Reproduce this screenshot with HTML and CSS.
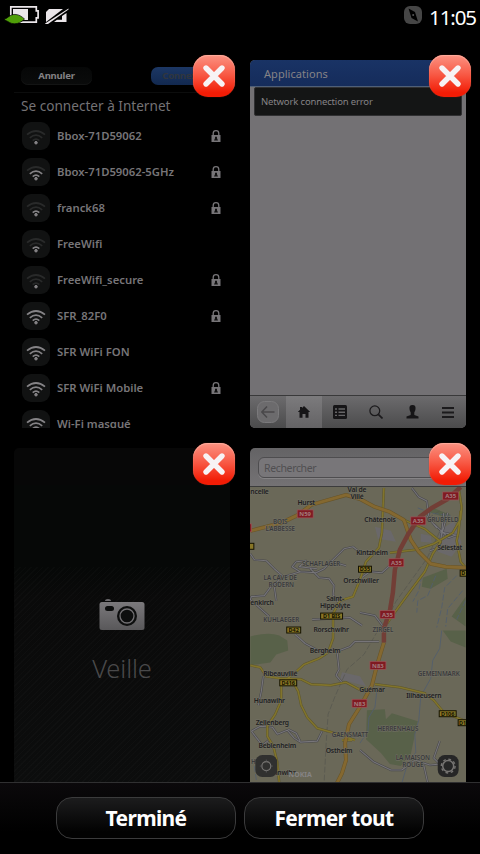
FILE: index.html
```html
<!DOCTYPE html>
<html lang="fr">
<head>
<meta charset="utf-8">
<title>Applications ouvertes</title>
<link rel="stylesheet" href="styles.css">
</head>
<body>
<svg class="defs" aria-hidden="true">
  <symbol id="lock" viewBox="0 0 10 12"><path d="M2.200 5V3.500a2.800 2.800 0 0 1 5.600 0V5" fill="none" stroke="#777578" stroke-width="1.300"/><path d="M.5 5h9v7h-9z" fill="#777578"/><path d="M4 6.800h2v1.500l1 2.200H3l1-2.200z" fill="#111"/></symbol>
  <symbol id="wifi" viewBox="0 0 28 28"><g fill="none" stroke-width="1.700"><path class="w3" d="M5 12.700Q14 5.300 23 12.700"/><path class="w2" d="M7.800 15.800Q14 10.600 20.200 15.800"/><path class="w1" d="M10.700 18.600Q14 15.700 17.300 18.600"/></g><circle cx="14" cy="20.700" r="1.300" fill="#858386"/></symbol>
  <symbol id="cross" viewBox="0 0 42 42"><path d="M13 13l16 16m0-16l-16 16" fill="none" stroke="#f7f3f5" stroke-width="5.400" stroke-linecap="round"/></symbol>
</svg>
<div class="screen">
  <header class="status">
    <svg class="battery" width="70" height="24" viewBox="0 0 70 24">
      <path d="M9.800 2.800h25.500v4h1.800v7h-1.800v4.400H9.800z" fill="none" stroke="#ebe6ea" stroke-width="1.700"/>
      <path d="M12 5h15v11H20L12 12z" fill="#ebe6ea"/>
      <path d="M3.500 14.800c3 .1 4.700-4.400 10.500-4.400 4 0 7 2.400 9.500 4.600-3 3-6 4.800-10 4.800-4.500 0-6-2.500-10-3.800z" fill="#4f9e08" stroke="#000" stroke-width=".7"/>
      <path d="M48 5h14L45 18V8z" fill="#ebe6ea"/>
      <path d="M44.500 19.300L67.500 4.500v1L47 20h-3z" fill="#ebe6ea"/>
      <path d="M65.500 9v9H53l3-2.300h5v-3.600z" fill="#ebe6ea"/>
    </svg>
    <svg class="compass" width="18" height="18" viewBox="0 0 18 18"><rect width="18" height="18" rx="6" fill="#464646"/><path d="M4.500 2.500L11 6l3 9.500L7.500 12z" fill="#000"/><circle cx="9.200" cy="9" r="1" fill="#565656"/></svg>
    <span class="clock">11:05</span>
  </header>

  <main class="grid">
    <section class="card">
      <div class="wifi">
        <div class="wifi-head"><span class="pill cancel">Annuler</span><span class="pill connect">Connexion</span></div>
        <h2>Se connecter à Internet</h2>
        <ul>
          <li class="s0"><svg class="sig"><use href="#wifi"/></svg><span>Bbox-71D59062</span><svg class="lk"><use href="#lock"/></svg></li>
          <li class="s2"><svg class="sig"><use href="#wifi"/></svg><span>Bbox-71D59062-5GHz</span><svg class="lk"><use href="#lock"/></svg></li>
          <li class="s1"><svg class="sig"><use href="#wifi"/></svg><span>franck68</span><svg class="lk"><use href="#lock"/></svg></li>
          <li class="s1"><svg class="sig"><use href="#wifi"/></svg><span>FreeWifi</span></li>
          <li class="s0"><svg class="sig"><use href="#wifi"/></svg><span>FreeWifi_secure</span><svg class="lk"><use href="#lock"/></svg></li>
          <li class="s3"><svg class="sig"><use href="#wifi"/></svg><span>SFR_82F0</span><svg class="lk"><use href="#lock"/></svg></li>
          <li class="s3"><svg class="sig"><use href="#wifi"/></svg><span>SFR WiFi FON</span></li>
          <li class="s3"><svg class="sig"><use href="#wifi"/></svg><span>SFR WiFi Mobile</span><svg class="lk"><use href="#lock"/></svg></li>
          <li class="s3"><svg class="sig"><use href="#wifi"/></svg><span>Wi-Fi masqué</span></li>
        </ul>
      </div>
      <svg class="close"><use href="#cross"/></svg>
    </section>

    <section class="card">
      <div class="store">
        <div class="store-head">Applications</div>
        <div class="error">Network connection error</div>
        <nav class="tools">
          <span><svg width="22" height="22" viewBox="0 0 22 22"><rect x=".5" y=".5" width="21" height="21" rx="7" fill="#6c6b6d" stroke="#7b7a7c"/><path d="M17.500 11H5M10 5.500L4.800 11l5.200 5.500" fill="none" stroke="#49484a" stroke-width="1.500"/></svg></span>
          <span class="on"><svg width="14" height="14" viewBox="0 0 14 14"><path d="M7 1l6.200 6H11.500v5.800H8.500V9h-3v3.800h-3V7H.8L3 4.800V2h2v1z" fill="#161517"/></svg></span>
          <span><svg width="14" height="14" viewBox="0 0 14 14"><rect width="14" height="14" rx="1.500" fill="#161517"/><path d="M2 4h2m1.500 0h6.500M2 7.200h2m1.500 0h6.500M2 10.400h2m1.500 0h6.500" stroke="#666567" stroke-width="1.400"/></svg></span>
          <span><svg width="14" height="14" viewBox="0 0 14 14"><circle cx="5.800" cy="5.800" r="4.900" fill="none" stroke="#1b1a1c" stroke-width="1.300"/><path d="M9.300 9.300L13.500 13.500" stroke="#1b1a1c" stroke-width="1.700"/></svg></span>
          <span><svg width="13" height="14" viewBox="0 0 13 14"><path d="M6.500 0C9 0 9.800 1.400 9.500 4c-.2 2-.9 2.600-1.200 3.400V10l4.200 1.600V13.500H.5v-1.900L4.700 10V7.400C4.400 6.600 3.700 6 3.500 4 3.200 1.400 4 0 6.500 0z" fill="#161517"/></svg></span>
          <span><svg width="12" height="13" viewBox="0 0 12 13"><path d="M0 2h12M0 6.500h12M0 11h12" stroke="#1b1a1c" stroke-width="1.900"/></svg></span>
        </nav>
      </div>
      <svg class="close"><use href="#cross"/></svg>
    </section>

    <section class="card">
      <div class="standby">
        <svg width="46" height="32" viewBox="0 0 46 32">
          <defs><linearGradient id="cam" x2="0" y2="1"><stop stop-color="#7b797c"/><stop offset="1" stop-color="#59585a"/></linearGradient></defs>
          <path d="M6 2q0-2 3-2t3 2z" fill="#6c6a6d"/><rect x=".5" y="3" width="45" height="28" rx="2.500" fill="url(#cam)"/>
          <rect x="6" y="7" width="9" height="5" rx="2.500" fill="#0d0e0e"/><circle cx="28" cy="17" r="10" fill="#0d0e0e"/><circle cx="28" cy="17" r="7" fill="none" stroke="#727073" stroke-width="1.300"/>
        </svg>
        <p>Veille</p>
      </div>
      <svg class="close"><use href="#cross"/></svg>
    </section>

    <section class="card">
      <div class="maps">
        <div class="search"><span>Rechercher</span></div>
        <svg class="map" width="216" height="297" viewBox="250 486 216 297">
          <defs>
            <g id="minor">
              <path d="M250 553l4 6 12 1 8 8 9 8 17-5 16 1 8-4 20-20 9-2 9 7 4-1M300 571l-8-5 4-5 10-1-7 6 18 2M310 568l9 9 10 1 5 7-1 9 6 9M283 576l-13 11-6 8-13 1-1 3 9 8 10 9M276 600l-2-14M312 619l38-2 12 8M346 565l-17-5"/>
              <path d="M412 487l7 9 8 4 2 15M360 578l10-7 12 1 12-11M427 515l10 12M434 523l15 14 8-3M444 512l-3 30-4 8M440 531l19 4M448 512l-9 33M430 550l16-5 8 4M360 612l15 3 9 12"/>
              <path d="M295 634l10 9 13 7 19 1 13-5 5-5h24M337 651l2 18-3 6 6 7M263 676l-2 15 -3 14M251 731l9-5 12 1 5 7 10-4 7 8 6 4 17-1 5-10M251 731l7 9 4 5 8-6M276 725l-6-6M360 750l14 12 17 8 11 0 13-10 15 5 11-1M424 765l4 18M300 741l-4-8-8-4M440 741l-6 17 8 8"/>
            </g>
            <path id="yl" d="M384 487l-2 45-3 15-13 14-6 18-7 17-13 4-7 13 0 25-5 14-9 6-15 6-10 9-14 11M390 552l26-3 18-6 19-11 8-14 1-12-3-19M404 519l21 9 16 13-8 12-8 18-15 20-16 22-7 10M461 510l-2 20-2 10 4 21 5 6M250 665l10 2 6 9 14 2 21 1 10 5 20 1 15-3 13 7 7-1M281 678v22l-6 14-8 12 0 10 6 10 4 16 2 21M291 678l7 13 3 14 6 12 10 11 18 5 20 7M375 684l25 3 25 6 9 7 10 12 22 9M342 740h10"/>
            <path id="main-road" d="M250 530l31-8 17-8 13-10 35-10 14 4 15 8 15 5 14 8 7 20 8 12 12 12 15 3 20 1M384 642l-7 23-5 20-11 20-12 19-4 19 1 17-4 13-5 10"/>
          </defs>
          <g fill="#586149">
            <path d="M250 636q18-5 29-1l8 5 1 10-12 4-6 8-20 3z"/>
            <path d="M367 710l18-1 1 10 6-6 26 8-7 33-10 12-11-2-9-11-15-14z"/>
            <path d="M443 630h23v17l-15-6zM423 577l24-9 1 10-17 10-9-2zM452 616l14-20v30zM431 506l20 8-4 3-18-6z"/>
          </g>
          <path d="M421 533l10 2 1 7-11-1zM375 526l16 4 5 11-18-3zM342 672l18 4 6 10-26-7zM440 530l14-10 8 22-10 14-14-5z" fill="#6a686a"/>
          <g class="streams">
            <path d="M442 630l-2 18-7 12-2 18-10 18-2 24-4 14 1 18-9 14-5 17M377 690l-2 17-6 10-1 14-8 12"/>
            <path d="M436 575l-8 20-10 5-1 12M457 575l-12 12-3 20-5 20M463 590l-15 18-2 18M422 575l-3 15-6 11M466 600l-9 19M418 507l13 5 20 3M256 780l-2-14" stroke-dasharray="6 2"/>
          </g>
          <g class="rail"><path d="M378 630l-14 24-17 15-12 27-7 18-2 30-2 39M447 516l-20 42-31 43-14 29M440 510l-16 10"/></g>
          <use class="minor" href="#minor"/><use class="minor-core" href="#minor"/>
          <use class="edge" href="#yl"/><use class="yellow" href="#yl"/>
          <use class="orange-edge" href="#main-road"/><use class="orange" href="#main-road"/>
          <path class="red-road" d="M461 486l-13 12-16 9-12 9-12 18-8 15-5 20-2 23-3 18-6 18 0 14"/>
          <g class="places">
            <text x="250" y="493" style="text-anchor:start">ncelle</text><text x="306" y="504">Hurst</text><text x="357" y="491">Val de</text><text x="357" y="498">Villé</text>
            <text class="area" x="280" y="523">BOIS</text><text class="area" x="280" y="530">L'ABBESSE</text>
            <text x="380" y="521">Châtenois</text><text class="area" x="443" y="521">GRUBFELD</text><text x="450" y="549">Sélestat</text><text x="372" y="554">Kintzheim</text>
            <text class="area" x="321" y="565">SCHAFLAGER</text><text class="area" x="280" y="579">LA CAVE DE</text><text class="area" x="281" y="586">RODERN</text><text x="361" y="582">Orschwiller</text>
            <text x="335" y="600">Saint-</text><text x="335" y="607">Hippolyte</text><text x="250" y="604" style="text-anchor:start">enkirch</text><text class="area" x="281" y="621">KUHLAEGER</text>
            <text x="331" y="631">Rorschwihr</text><text class="area" x="383" y="631">ZIRGEL</text><text x="325" y="653">Bergheim</text><text x="280" y="676">Ribeauvillé</text><text x="372" y="692">Guémar</text>
            <text class="area" x="439" y="676">GEMEINMARK</text><text x="424" y="698">Illhaeusern</text><text x="269" y="703">Hunawihr</text><text x="272" y="725">Zellenberg</text><text class="area" x="350" y="737">GAENSMATT</text>
            <text class="area" x="398" y="731">HERRENHAUS</text><text x="277" y="748">Beblenheim</text><text x="339" y="753">Ostheim</text><text class="area" x="413" y="760">LA MAISON</text><text class="area" x="413" y="767">ROUGE</text>
            <text class="area" x="261" y="764">HSHOF</text><text x="280" y="775">Bennwihr</text>
          </g>
          <text class="brand" x="300" y="777">NOKIA</text>
          <g class="red-sign">
            <rect x="297" y="509" width="16" height="8"/><rect x="443" y="491" width="16" height="8"/><rect x="411" y="516" width="15" height="8"/><rect x="389" y="558" width="15" height="8"/><rect x="380" y="610" width="15" height="8"/><rect x="370" y="661" width="16" height="8"/><rect x="352" y="699" width="15" height="8"/><rect x="243" y="523" width="8" height="8"/>
            <text x="305" y="515.500">N59</text><text x="451" y="497.500">A35</text><text x="418.500" y="522.500">A35</text><text x="396.500" y="564.500">A35</text><text x="387.500" y="616.500">A35</text><text x="378" y="667.500">N83</text><text x="359.500" y="705.500">N83</text>
          </g>
          <g class="yellow-sign">
            <rect x="320.500" y="612.500" width="22" height="6"/><rect x="286.500" y="626.500" width="14" height="6"/><rect x="358.500" y="565.500" width="13" height="6"/><rect x="279.500" y="679.500" width="17" height="6"/><rect x="439.500" y="710.500" width="17" height="6"/><rect x="458.500" y="719.500" width="18" height="6"/><rect x="460.500" y="569.500" width="15" height="6"/><rect x="240.500" y="542.500" width="13" height="6"/>
            <text x="331.500" y="617.500">D1 BIS</text><text x="293.500" y="631.500">D42</text><text x="365" y="570.500">D35</text><text x="288" y="684.500">D416</text><text x="448" y="715.500">D106</text><text x="463" y="724.500">D1</text><text x="463.500" y="574.500">D</text>
          </g>
          <rect x="255" y="755" width="22" height="22" rx="7" fill="#30302f"/><circle cx="266" cy="766" r="4.500" fill="none" stroke="#777573" stroke-width="1.200"/><path d="M266 759.500v2m0 9v2M259.500 766h2m9 0h2" stroke="#555" stroke-width="1"/>
          <rect x="438" y="755" width="21" height="22" rx="7" fill="#262626"/><circle cx="448.500" cy="766" r="5.500" fill="none" stroke="#777573" stroke-width="1.500"/><circle cx="448.500" cy="766" r="6.900" fill="none" stroke="#777573" stroke-width="1.400" stroke-dasharray="2.700 2.720"/>
        </svg>
      </div>
      <svg class="close"><use href="#cross"/></svg>
    </section>
  </main>

  <footer class="actions"><button>Terminé</button><button>Fermer tout</button></footer>
</div>
</body>
</html>
```
FILE: styles.css
```css
* { box-sizing: border-box; }
body { margin: 0; background: #000; font-family: "Noto Sans", "Open Sans", sans-serif; }
.defs { position: absolute; width: 0; height: 0; }
.screen { width: 480px; height: 854px; display: flex; flex-direction: column; overflow: hidden; background: #000; }
.status { height: 60px; flex: none; display: flex; align-items: flex-start; padding: 4px 4px 0 1px; }
.battery { display: block; }
.compass { margin: 2px 7px 0 auto; }
.clock { color: #fff; font-size: 20.500px; line-height: 26px; letter-spacing: -1.1px; white-space: nowrap; }

.grid { flex: 1; min-height: 0; overflow: visible; display: grid; grid-template-columns: 216px 216px; grid-template-rows: 368px 335px; gap: 20px; padding: 0 14px; }
.card { position: relative; min-width: 0; }
.close { position: absolute; right: -5px; top: -5px; width: 42px; height: 42px; border-radius: 15px; background: linear-gradient(#fb9282, #f85b47 45%, #f21c05 90%); box-shadow: inset 0 1px 1px #ffad9d, 0 0 1px #a42b1b; }

.wifi { height: 368px; overflow: hidden; color: #777578; }
.wifi-head { height: 33px; border-bottom: 1px solid #0c0d0d; display: flex; justify-content: space-between; padding: 7px 8px 0 7px; }
.pill { width: 71px; height: 18px; border-radius: 7px; font-size: 9.500px; font-weight: 700; line-height: 18px; text-align: center; letter-spacing: -.2px; }
.cancel { background: linear-gradient(#060707, #0a0b0b); box-shadow: inset 0 -1px #131414; color: #838184; }
.connect { background: linear-gradient(#1c3764, #122950); color: #30363e; }
.wifi h2 { margin: 0; padding-left: 7px; height: 25px; font-weight: 400; font-size: 13.600px; line-height: 25px; color: #747275; white-space: nowrap; }
.wifi ul { list-style: none; margin: 0; padding: 0 9px 0 8px; }
.wifi li { height: 36px; display: flex; align-items: center; font-size: 11.300px; font-weight: 600; line-height: 16px; white-space: nowrap; }
.sig { width: 28px; height: 28px; border-radius: 9px; background: #111212; margin-right: 7px; flex: none; stroke: #858386; }
.lk { width: 10px; height: 12px; margin-left: auto; }
.s0 .sig, .s1 .sig, .s2 .sig { --w3: #292a2a; }
.s0 .sig, .s1 .sig { --w2: #292a2a; }
.s0 .sig { --w1: #292a2a; }
.w1 { stroke: var(--w1, #858386); }
.w2 { stroke: var(--w2, #858386); }
.w3 { stroke: var(--w3, #858386); }

.store { height: 368px; border-radius: 5px; overflow: hidden; background: #737174; display: flex; flex-direction: column; }
.store-head { height: 27px; flex: none; padding-left: 14px; background: linear-gradient(#193365, #152c5b); border-bottom: 1px solid #4e5f78; color: #858386; font-size: 11px; line-height: 27px; letter-spacing: .05px; }
.error { height: 29px; margin: 0 4px; padding-left: 6px; border: 1px solid #303032; border-radius: 2px; background: #141515; color: #858386; font-size: 9.500px; line-height: 27px; letter-spacing: -.15px; }
.tools { margin-top: auto; height: 33px; display: grid; grid-template-columns: repeat(6, 36px); background: linear-gradient(#6c6b6d, #4b4b4c); border-top: 1px solid #39393a; }
.tools span { display: flex; align-items: center; justify-content: center; }
.tools .on { background: linear-gradient(#7c7b7d, #646365); }

.standby { height: 335px; border-radius: 5px 5px 0 0; display: flex; flex-direction: column; align-items: center; padding-top: 151px; color: #49494a; background: repeating-linear-gradient(135deg, #ffffff04 0 1px, transparent 1px 4px) 0 119px no-repeat, linear-gradient(#070707 0 37px, #060807 37px 119px, #0a0a0a 150px, #0c0d0d); }
.standby p { margin: 17px 0 0; font-size: 25.500px; font-weight: 300; line-height: 40px; letter-spacing: -.1px; }
.maps { height: 335px; border-radius: 5px 5px 0 0; overflow: hidden; }
.search { height: 38px; padding: 9px 10px 0 8px; background: linear-gradient(#646365, #747274); }
.search span { display: block; height: 21px; padding-left: 5px; border: 1px solid #4e4d4f; border-radius: 6px; background: #787679; box-shadow: 0 1px #858385; color: #504f51; font-size: 10.500px; line-height: 20px; letter-spacing: -.35px; }

.map { display: block; background: #6a6858; border-top: 1px solid #3c3c3c; }
.streams, .rail, .minor, .minor-core, .edge, .yellow, .orange-edge, .orange, .red-road { fill: none; stroke-linejoin: round; }
.streams { stroke: #535e6c; stroke-width: .9; }
.rail { stroke: #55554e; stroke-width: .7; stroke-dasharray: 6 2; }
.minor { stroke: #48484b; stroke-width: 2.200; }
.minor-core { stroke: #777579; stroke-width: 1.100; }
.edge { stroke: #5c552b; stroke-width: 2.500; }
.yellow { stroke: #81742c; stroke-width: 1.600; }
.orange-edge { stroke: #675429; stroke-width: 4; }
.orange { stroke: #846830; stroke-width: 2.900; }
.red-road { stroke: #723e36; stroke-width: 4.500; }
.places { font-size: 6.800px; font-weight: 600; text-anchor: middle; fill: #202020; stroke: #737166; stroke-width: .8px; paint-order: stroke; letter-spacing: -.2px; }
.places .area { fill: #39393b; font-size: 6.300px; letter-spacing: -.1px; }
.red-sign rect { fill: #801a22; stroke: #9a5558; stroke-width: .7; }
.red-sign text, .yellow-sign text { font-size: 6px; font-weight: 700; text-anchor: middle; }
.red-sign text { fill: #a17b7c; }
.yellow-sign rect { fill: #887626; stroke: #151300; stroke-width: 1; }
.yellow-sign text { fill: #151300; font-size: 5.500px; }
.brand { font-size: 7px; font-weight: 700; text-anchor: middle; fill: #858384; }

.actions { position: relative; height: 72px; flex: none; display: flex; justify-content: center; gap: 8px; padding-top: 14px; border-top: 1px solid #303031; background: linear-gradient(#0b090b, #000 70%); }
.actions button { width: 180px; height: 42px; padding: 0 0 1px; border: 1px solid #3b3b3c; border-radius: 16px; background: linear-gradient(#1c1c1d, #020202 85%); color: #fff; font: 700 21px/38px "Noto Sans", sans-serif; letter-spacing: -.65px; }
```
